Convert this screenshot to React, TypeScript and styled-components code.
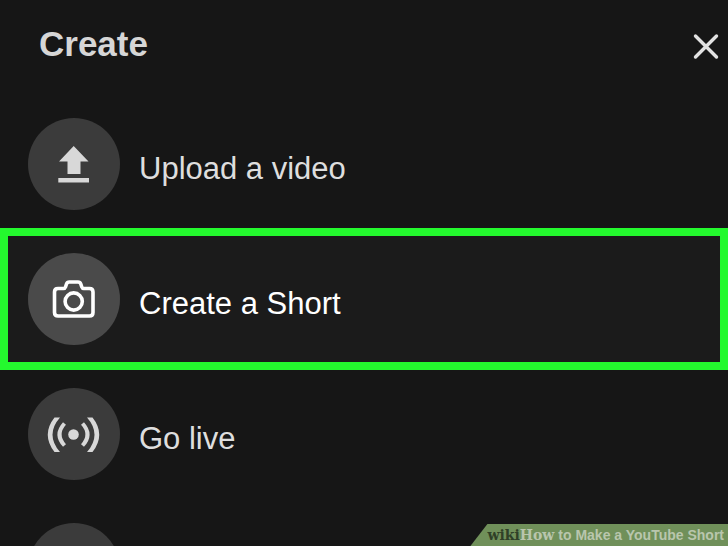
import React from "react";
import styled, { createGlobalStyle } from "styled-components";

const GlobalStyle = createGlobalStyle`
  * { box-sizing: border-box; }
  body { margin: 0; background: #161616; }
`;

const Sheet = styled.main`
  position: relative;
  height: 100vh;
  overflow: hidden;
  background: #161616;
  color: #dedede;
  font-family: "Liberation Sans", Arial, sans-serif;
`;

const Header = styled.header`
  display: flex;
  align-items: center;
  justify-content: space-between;
  height: 92px;
  padding: 0 8px 4px 39px;
`;

const Title = styled.h1`
  margin: 0;
  font-size: 35px;
  line-height: 48px;
  font-weight: 700;
  color: #d6d6d6;
`;

const CloseButton = styled.button`
  display: flex;
  margin-top: 4px;
  padding: 0;
  border: 0;
  background: none;
  color: #e2e2e2;
  cursor: pointer;
`;

const Options = styled.ul`
  display: flex;
  flex-direction: column;
  gap: 43px;
  margin: 0;
  padding: 26px 0 0;
  list-style: none;
`;

const Option = styled.li<{ $highlighted?: boolean }>`
  ${({ $highlighted }) =>
    $highlighted
      ? "margin: -25px 0; padding: 17px 0; border: 8px solid #24f92e; background: #1b1b1b; color: #fff; --inset: 20px; --disc: #4a4a4a;"
      : "--inset: 28px; --disc: #3b3b3b;"}
`;

const OptionButton = styled.button`
  display: flex;
  align-items: center;
  gap: 19px;
  width: 100%;
  padding: 0 0 0 var(--inset);
  border: 0;
  background: none;
  color: inherit;
  font: inherit;
  text-align: left;
  cursor: pointer;
`;

const Disc = styled.span`
  display: flex;
  flex: none;
  align-items: center;
  justify-content: center;
  width: 92px;
  height: 92px;
  border-radius: 50%;
  background: var(--disc);
`;

const Label = styled.span`
  padding-top: 10px;
  font-size: 31px;
  line-height: 44px;
`;

const Watermark = styled.footer`
  position: absolute;
  right: 0;
  bottom: 0;
  height: 22px;
  padding: 0 4px 0 17px;
  background: #70905a;
  clip-path: polygon(17px 0, 100% 0, 100% 100%, 0 100%);
  color: #b9c6ad;
  font-family: "Liberation Sans", Arial, sans-serif;
  font-size: 14px;
  line-height: 23px;
  font-weight: 700;
  white-space: nowrap;
`;

const Brand = styled.span<{ $dark?: boolean }>`
  color: ${({ $dark }) => ($dark ? "#2f4027" : "#b9c6ad")};
  font-family: "DejaVu Serif", serif;
  font-size: 14px;
`;

const UploadIcon = () => (
  <svg width="48" height="48" viewBox="0 0 48 48" fill="#d8d8d8" aria-hidden="true">
    <path d="M23.700 6 38.500 21.500H30.500V34H17.500V21.500H9Z" />
    <path d="M8.300 38H39V42.500H8.300Z" />
  </svg>
);

const CameraIcon = () => (
  <svg width="48" height="48" viewBox="0 0 48 48" fill="none" stroke="#fff" strokeWidth="3.600" strokeLinejoin="round" aria-hidden="true">
    <path d="M8 13.500H13.500Q15 13.500 15.500 12L16.500 9Q17.200 7 19.300 7H28Q30.100 7 30.800 9L31.800 12Q32.300 13.500 33.800 13.500H39.500Q43 13.500 43 17V37.500Q43 41 39.500 41H8Q4.500 41 4.500 37.500V17Q4.500 13.500 8 13.500Z" />
    <circle cx="23.700" cy="26.500" r="8.600" />
  </svg>
);

const LiveIcon = () => (
  <svg width="56" height="48" viewBox="0 0 56 48" fill="#d8d8d8" aria-hidden="true">
    <circle cx="27.500" cy="24.500" r="5.300" />
    <path d="M8.500 7.500H14Q-1 24.500 14 42H8.500Q-5 24.500 8.500 7.500Z" />
    <path d="M46.500 7.500H41Q56 24.500 41 42H46.500Q60 24.500 46.500 7.500Z" />
    <path d="M18.500 13.500Q8.500 24.500 18.500 35.500M36.500 13.500Q46.500 24.500 36.500 35.500" fill="none" stroke="#d8d8d8" strokeWidth="4" />
  </svg>
);

const options = [
  { label: "Upload a video", icon: <UploadIcon /> },
  { label: "Create a Short", icon: <CameraIcon />, highlighted: true },
  { label: "Go live", icon: <LiveIcon /> },
  { label: "", icon: null },
];

export default function App() {
  return (
    <Sheet>
      <GlobalStyle />
      <Header>
        <Title>Create</Title>
        <CloseButton type="button" aria-label="Close">
          <svg width="28" height="28" viewBox="0 0 28 28" stroke="currentColor" strokeWidth="3.400" strokeLinecap="round" aria-hidden="true">
            <path d="M3.500 4 24.500 25M24.500 4 3.500 25" />
          </svg>
        </CloseButton>
      </Header>
      <Options>
        {options.map(({ label, icon, highlighted }, index) => (
          <Option key={index} $highlighted={highlighted}>
            <OptionButton type="button" aria-label={label || "More"}>
              <Disc>{icon}</Disc>
              {label && <Label>{label}</Label>}
            </OptionButton>
          </Option>
        ))}
      </Options>
      <Watermark>
        <Brand $dark>wiki</Brand>
        <Brand>How</Brand> to Make a YouTube Short
      </Watermark>
    </Sheet>
  );
}
